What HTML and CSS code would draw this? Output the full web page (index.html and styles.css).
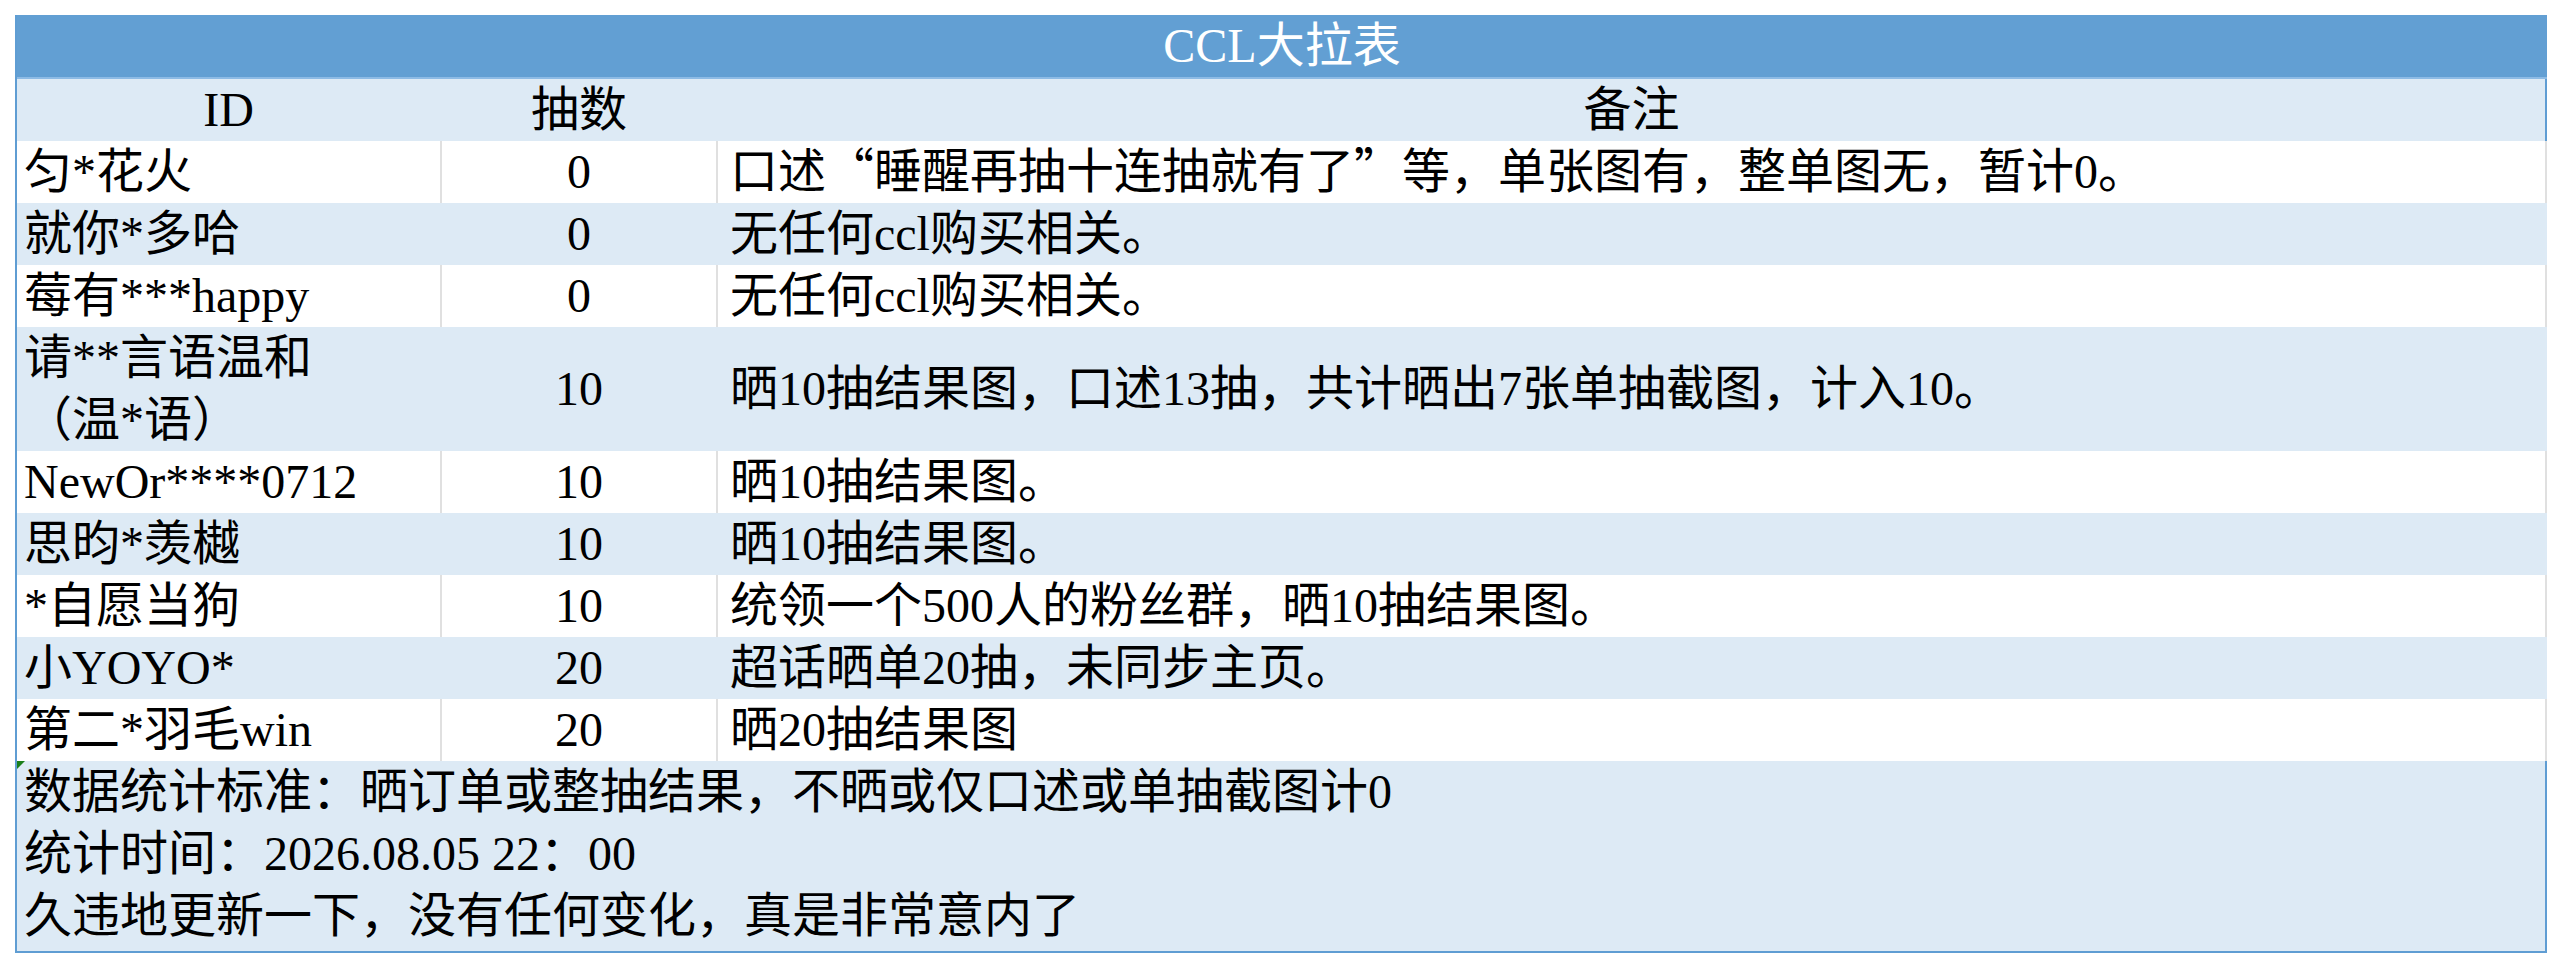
FILE: index.html
```html
<!DOCTYPE html>
<html lang="zh-CN">
<head>
<meta charset="utf-8">
<title>CCL大拉表</title>
<link rel="stylesheet" href="styles.css">
</head>
<body>
<table class="sheet">
  <colgroup>
    <col class="c-id">
    <col class="c-num">
    <col class="c-note">
  </colgroup>
  <tr class="title-row"><th colspan="3">CCL大拉表</th></tr>
  <tr class="head-row"><td class="ctr">ID</td><td class="ctr">抽数</td><td class="ctr last">备注</td></tr>
  <tr class="w"><td>匀*花火</td><td class="ctr">0</td><td class="note last">口述<span class="cjk">“</span>睡醒再抽十连抽就有了<span class="cjk">”</span>等，单张图有，整单图无，暂计0。</td></tr>
  <tr class="b"><td>就你*多哈</td><td class="ctr">0</td><td class="note last">无任何ccl购买相关。</td></tr>
  <tr class="w"><td>莓有***happy</td><td class="ctr">0</td><td class="note last">无任何ccl购买相关。</td></tr>
  <tr class="b"><td>请**言语温和<br>（温*语）</td><td class="ctr">10</td><td class="note last">晒10抽结果图，口述13抽，共计晒出7张单抽截图，计入10。</td></tr>
  <tr class="w"><td>NewOr****0712</td><td class="ctr">10</td><td class="note last">晒10抽结果图。</td></tr>
  <tr class="b"><td>思昀*羡樾</td><td class="ctr">10</td><td class="note last">晒10抽结果图。</td></tr>
  <tr class="w"><td>*自愿当狗</td><td class="ctr">10</td><td class="note last">统领一个500人的粉丝群，晒10抽结果图。</td></tr>
  <tr class="b"><td>小YOYO*</td><td class="ctr">20</td><td class="note last">超话晒单20抽，未同步主页。</td></tr>
  <tr class="w"><td>第二*羽毛win</td><td class="ctr">20</td><td class="note last">晒20抽结果图</td></tr>
  <tr class="notes-row"><td colspan="3"><span class="flag"></span>数据统计标准：晒订单或整抽结果，不晒或仅口述或单抽截图计0<br>统计时间：2026.08.05 22：00<br>久违地更新一下，没有任何变化，真是非常意内了</td></tr>
</table>
</body>
</html>
```

FILE: styles.css
```css
html, body {
  margin: 0;
  padding: 0;
  background: #ffffff;
}

body {
  padding: 15px 0 0 15px;
  font-family: "Liberation Serif", "Noto Sans CJK SC", serif;
  font-size: 48px;
  color: #000000;
}

.sheet {
  border-collapse: separate;
  border-spacing: 0;
  table-layout: fixed;
  width: 2532px;
  border-left: 2px solid #5f9dd3;
}

.c-id { width: 425px; }
.c-num { width: 276px; }
.c-note { width: 1829px; }

.sheet td, .sheet th {
  padding: 0 7px;
  height: 62px;
  line-height: 62px;
  vertical-align: middle;
  text-align: left;
  font-weight: 400;
  white-space: nowrap;
  border-right: 2px solid transparent;
}

.cjk {
  font-family: "Noto Sans CJK SC", sans-serif;
  line-height: 0;
}

.title-row th {
  background: #629fd3;
  color: #ffffff;
  text-align: center;
  border-right: 0;
  border-bottom: 2px solid #8dbbe5;
}

.head-row td {
  background: #ddeaf5;
  border-right-color: #ddeaf5;
}

.head-row td.last {
  border-right-color: #5f9dd3;
}

.w td {
  background: #ffffff;
  border-right-color: #e0e0e0;
}

.b td {
  background: #ddeaf5;
  border-right-color: #ddeaf5;
}

.sheet td.ctr {
  text-align: center;
}

.sheet td.note {
  padding-left: 12px;
}

.notes-row td {
  position: relative;
  background: #ddeaf5;
  border-right: 2px solid #5f9dd3;
  border-bottom: 2px solid #5f9dd3;
  height: auto;
  padding: 0 7px 4px 7px;
  line-height: 62px;
  vertical-align: top;
}

.flag {
  position: absolute;
  left: 0;
  top: 0;
  width: 0;
  height: 0;
  border-top: 8px solid #1a7f1a;
  border-right: 8px solid transparent;
}
```
